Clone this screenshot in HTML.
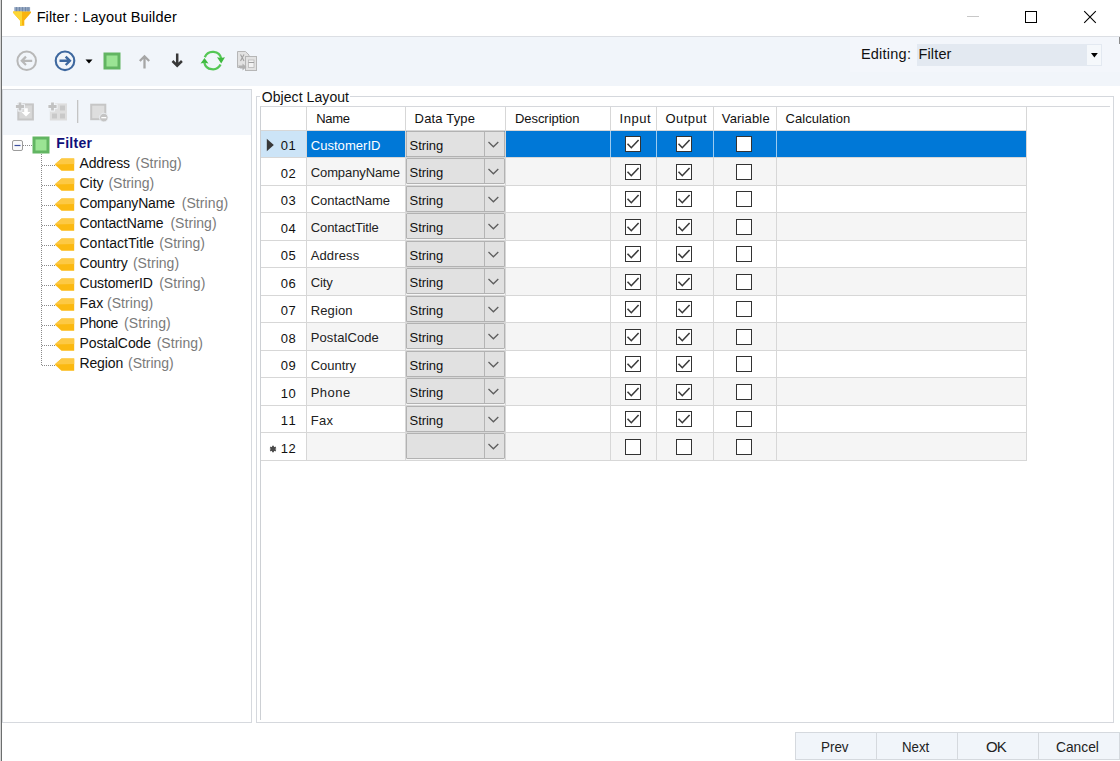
<!DOCTYPE html><html><head><meta charset="utf-8"><title>Filter : Layout Builder</title><style>
*{box-sizing:border-box;margin:0;padding:0}
html,body{width:1120px;height:761px;overflow:hidden;background:#fff}
body{font-family:"Liberation Sans",sans-serif;font-size:13px;color:#1e1e1e;position:relative}
.abs{position:absolute}
#lborder{left:0;top:0;width:2px;height:761px;background:linear-gradient(90deg,#d6d6d6 0,#d6d6d6 1px,#6c6e6e 1px,#6c6e6e 2px)}
#title{left:2px;top:0;width:1118px;height:37px;background:#fff;border-bottom:1px solid #dcdfe4}
#toolbar{left:2px;top:37px;width:1118px;height:49px;background:#f1f5fa}
#lpanel{left:2px;top:89px;width:250px;height:634px;border:1px solid #d6d9de;background:#fff}
#lhead{left:0;top:0;width:248px;height:45px;background:#f1f5fa}
#gbox{left:256px;top:96px;width:858px;height:627px;border:1px solid #d5d8dd}
#gtitle{left:260px;top:89px;width:90px;height:16px;background:#fff}
#grid{left:260px;top:106px;width:850px;height:614px;border-left:1px solid #cdd0d4;border-top:1px solid #d6d8dc}
.t{position:absolute;white-space:nowrap;line-height:20px;height:20px}
.hl{position:absolute;background:#d7d7d7}
.cb{position:absolute;width:16px;height:16px;border:1px solid #333;background:#fff}
.combo{position:absolute;background:#e1e1e1;border:1px solid #b2b2b2;border-radius:1px}
.btn{position:absolute;top:732px;height:28px;width:82px;border:1px solid #d5d9de;background:#f1f5fa}
</style></head><body>
<div class="abs" id="lborder"></div>
<div class="abs" id="title">
<svg class="abs" style="left:10px;top:5px" width="22" height="23" viewBox="0 0 22 23"><rect x="2.300" y="2.100" width="15.800" height="4.600" fill="#91a4bf"/><path d="M4.500 2.100 V6.500 M7.500 2.100 V6.500 M10.500 2.100 V6.500 M13.500 2.100 V6.500 M16 2.100 V6.500" stroke="#7389a8" stroke-width="1"/><path d="M1.100 6.500 H19 V7.700 L12.300 15.500 V20.800 H8 V15.500 L1.100 7.700 Z" fill="#f8b40e"/><path d="M1.100 6.500 H10 V20.800 H8 V15.500 L1.100 7.700 Z" fill="#fdd633"/></svg>
<svg class="abs" style="left:950px;top:0" width="168" height="36" viewBox="0 0 168 36"><path d="M15 16.500 H27" stroke="#c8c8c8" stroke-width="1"/><rect x="73.500" y="11.500" width="11" height="11" fill="none" stroke="#000" stroke-width="1"/><path d="M132.200 11.200 L143.800 22.800 M143.800 11.200 L132.200 22.800" stroke="#000" stroke-width="1.100"/></svg>
</div>
<div class="t" style="left:36.63px;top:6.68px;font-size:14.5px;color:#000;letter-spacing:0.140px">Filter : Layout Builder</div>
<div class="abs" id="toolbar">
<div class="abs" style="left:848px;top:0;width:270px;height:35px;background:#f3f6fb"></div>
<svg class="abs" style="left:0;top:0" width="270" height="48" viewBox="0 0 270 48">
<circle cx="24.700" cy="23.800" r="9.300" fill="none" stroke="#b8b8b8" stroke-width="2"/><path d="M30.200 23.800 H20.500 M24 19.600 L19.800 23.800 L24 28" fill="none" stroke="#b8b8b8" stroke-width="2.200"/>
<circle cx="63" cy="23.800" r="9.300" fill="none" stroke="#3e689f" stroke-width="2.100"/><path d="M57.500 23.800 H67.200 M63.700 19.600 L67.900 23.800 L63.700 28" fill="none" stroke="#3e689f" stroke-width="2.400"/>
<path d="M83.500 22.500 H90.500 L87 26.500 Z" fill="#000"/>
<rect x="103" y="17" width="14" height="14" fill="#9be494" stroke="#62b562" stroke-width="3"/>
<path d="M142.500 31.500 V19.500 M137.800 24 L142.500 19.300 L147.200 24" fill="none" stroke="#a6a6a6" stroke-width="2.300"/>
<path d="M175.200 16.500 V28.500 M170.500 24 L175.200 28.700 L179.900 24" fill="none" stroke="#383838" stroke-width="2.500"/>
<g fill="none" stroke="#55c755" stroke-width="2.300"><path d="M202.79 20.20 A8.7 8.7 0 0 1 219.31 21.79"/><path d="M218.55 27.55 A8.7 8.7 0 0 1 202.29 25.41"/></g>
<path d="M215.0 20.2 L219.0 21.0 L223.0 20.2 L219.2 26.4 Z" fill="#3fba3f"/><path d="M198.5 26.4 L202.5 25.7 L206.5 26.4 L202.5 21.0 Z" fill="#3fba3f"/>
<g fill="#e2e2e2" stroke="#b6b6b6" stroke-width="1"><path d="M235.500 14.500 H243.500 L247 18 V30.500 H235.500 Z"/><rect x="243.500" y="19.500" width="11" height="14"/></g><rect x="246.500" y="23" width="5.500" height="7.500" fill="#f2f2f2" stroke="#b8b8b8" stroke-width="0.800"/><path d="M238.500 17.500 L242 24 M242 17.500 L238.500 24 M246.500 25.500 H252" stroke="#a0a0a0" stroke-width="1.100" fill="none"/><path d="M236 28.500 H240.500 V26.500 L244.500 30 L240.500 33.500 V31.500 H238 Z" fill="#b0b0b0"/>
</svg>
<div class="abs" style="left:915px;top:7px;width:185px;height:22px;background:#e3e9f1"></div>
<div class="abs" style="left:1085px;top:8px;width:14px;height:20px;background:#f5f8fb"></div>
<svg class="abs" style="left:1085px;top:7px" width="14" height="22"><path d="M4 9 H10.800 L7.400 13.500 Z" fill="#000"/></svg>
<div class="abs" style="left:1117px;top:0;width:1px;height:7px;background:#8c8c8c"></div>
</div>
<div class="t" style="left:860.93px;top:44.28px;font-size:14.5px;color:#111;letter-spacing:0.233px">Editing:</div>
<div class="t" style="left:918.53px;top:44.28px;font-size:14.5px;color:#111;letter-spacing:0.135px">Filter</div>
<div class="abs" id="lpanel"><div class="abs" id="lhead"></div>
<svg class="abs" style="left:1px;top:-1px" width="247" height="46" viewBox="0 0 247 46">
<rect x="14.300" y="15.400" width="14.600" height="15.100" fill="#d8d8d8" stroke="#c6c6c6" stroke-width="2"/>
<path d="M20.200 19.300 H23.800 V23 H26.500 L22 27.600 L17.500 23 H20.200 Z" fill="#fff"/>
<path d="M14.600 13.400 H17.400 V16.100 H20.100 V18.900 H17.400 V21.600 H14.600 V18.900 H11.900 V16.100 H14.600 Z" fill="#c2c2c2" stroke="#f4f7fb" stroke-width="1.800" paint-order="stroke"/>
<rect x="45.800" y="14.400" width="17.200" height="17.100" fill="#dedede"/>
<g fill="#c9c9c9"><rect x="56" y="16.500" width="5" height="5"/><rect x="48" y="24.500" width="5" height="5"/><rect x="56" y="24.500" width="5" height="5"/></g>
<path d="M47.100 13.400 H49.900 V16.100 H52.600 V18.900 H49.900 V21.600 H47.100 V18.900 H44.400 V16.100 H47.100 Z" fill="#c2c2c2" stroke="#f4f7fb" stroke-width="1.800" paint-order="stroke"/>
<rect x="73" y="11" width="1.300" height="23" fill="#c4c4c4"/>
<rect x="87.200" y="15.700" width="14.100" height="14.500" fill="#dedede" stroke="#c6c6c6" stroke-width="2"/><circle cx="99.800" cy="28.600" r="4.300" fill="#c4c4c4" stroke="#f1f5fa" stroke-width="0.800"/><rect x="97.300" y="28" width="5" height="1.300" fill="#fff"/>
</svg>
<svg class="abs" style="left:1px;top:45px" width="247" height="250" viewBox="0 0 247 250">
<rect x="8.500" y="5.500" width="10" height="10" rx="1.500" fill="#fafafa" stroke="#9c9c9c"/><path d="M10.500 10.500 H16.500" stroke="#3c4fa0" stroke-width="1.200"/>
<path d="M19 10.500 H28" stroke="#8a8a8a" stroke-dasharray="1 1"/>
<rect x="30" y="3" width="14" height="14" fill="#9be494" stroke="#62b562" stroke-width="3"/>
<path d="M37.500 19 V230" stroke="#8a8a8a" stroke-dasharray="1 1"/>
<path d="M38 30.5 H51" stroke="#8a8a8a" stroke-dasharray="1 1"/>
<path d="M50.700 29.6 L57.500 23.5 H70.200 V35.7 H57.500 Z" fill="#fbb911"/><path d="M50.700 29.6 L57.500 23.5 H70.200 V29.1 Z" fill="#fdc944"/>
<path d="M38 50.5 H51" stroke="#8a8a8a" stroke-dasharray="1 1"/>
<path d="M50.700 49.6 L57.500 43.5 H70.200 V55.7 H57.500 Z" fill="#fbb911"/><path d="M50.700 49.6 L57.500 43.5 H70.200 V49.1 Z" fill="#fdc944"/>
<path d="M38 70.5 H51" stroke="#8a8a8a" stroke-dasharray="1 1"/>
<path d="M50.700 69.6 L57.500 63.5 H70.200 V75.7 H57.500 Z" fill="#fbb911"/><path d="M50.700 69.6 L57.500 63.5 H70.200 V69.1 Z" fill="#fdc944"/>
<path d="M38 90.5 H51" stroke="#8a8a8a" stroke-dasharray="1 1"/>
<path d="M50.700 89.6 L57.500 83.5 H70.200 V95.7 H57.500 Z" fill="#fbb911"/><path d="M50.700 89.6 L57.500 83.5 H70.200 V89.1 Z" fill="#fdc944"/>
<path d="M38 110.5 H51" stroke="#8a8a8a" stroke-dasharray="1 1"/>
<path d="M50.700 109.6 L57.500 103.5 H70.200 V115.7 H57.500 Z" fill="#fbb911"/><path d="M50.700 109.6 L57.500 103.5 H70.200 V109.1 Z" fill="#fdc944"/>
<path d="M38 130.5 H51" stroke="#8a8a8a" stroke-dasharray="1 1"/>
<path d="M50.700 129.6 L57.500 123.5 H70.200 V135.7 H57.500 Z" fill="#fbb911"/><path d="M50.700 129.6 L57.500 123.5 H70.200 V129.1 Z" fill="#fdc944"/>
<path d="M38 150.5 H51" stroke="#8a8a8a" stroke-dasharray="1 1"/>
<path d="M50.700 149.6 L57.500 143.5 H70.200 V155.7 H57.500 Z" fill="#fbb911"/><path d="M50.700 149.6 L57.500 143.5 H70.200 V149.1 Z" fill="#fdc944"/>
<path d="M38 170.5 H51" stroke="#8a8a8a" stroke-dasharray="1 1"/>
<path d="M50.700 169.6 L57.500 163.5 H70.200 V175.7 H57.500 Z" fill="#fbb911"/><path d="M50.700 169.6 L57.500 163.5 H70.200 V169.1 Z" fill="#fdc944"/>
<path d="M38 190.5 H51" stroke="#8a8a8a" stroke-dasharray="1 1"/>
<path d="M50.700 189.6 L57.500 183.5 H70.200 V195.7 H57.500 Z" fill="#fbb911"/><path d="M50.700 189.6 L57.500 183.5 H70.200 V189.1 Z" fill="#fdc944"/>
<path d="M38 210.5 H51" stroke="#8a8a8a" stroke-dasharray="1 1"/>
<path d="M50.700 209.6 L57.500 203.5 H70.200 V215.7 H57.500 Z" fill="#fbb911"/><path d="M50.700 209.6 L57.500 203.5 H70.200 V209.1 Z" fill="#fdc944"/>
<path d="M38 230.5 H51" stroke="#8a8a8a" stroke-dasharray="1 1"/>
<path d="M50.700 229.6 L57.500 223.5 H70.200 V235.7 H57.500 Z" fill="#fbb911"/><path d="M50.700 229.6 L57.500 223.5 H70.200 V229.1 Z" fill="#fdc944"/>
</svg>
</div>
<div class="t" style="left:56.36px;top:133.15px;font-size:14px;color:#10107a;letter-spacing:0.262px;font-weight:bold">Filter</div>
<div class="t" style="left:79.46px;top:152.75px;font-size:14px;color:#111;letter-spacing:-0.136px">Address</div>
<div class="t" style="left:135.56px;top:152.75px;font-size:14px;color:#7a7a7a;letter-spacing:0.035px">(String)</div>
<div class="t" style="left:79.46px;top:172.75px;font-size:14px;color:#111;letter-spacing:0.010px">City</div>
<div class="t" style="left:108.46px;top:172.75px;font-size:14px;color:#7a7a7a;letter-spacing:-0.037px">(String)</div>
<div class="t" style="left:79.46px;top:192.75px;font-size:14px;color:#111;letter-spacing:-0.172px">CompanyName</div>
<div class="t" style="left:181.66px;top:192.75px;font-size:14px;color:#7a7a7a;letter-spacing:0.092px">(String)</div>
<div class="t" style="left:79.46px;top:212.75px;font-size:14px;color:#111;letter-spacing:-0.145px">ContactName</div>
<div class="t" style="left:170.41px;top:212.75px;font-size:14px;color:#7a7a7a;letter-spacing:0.042px">(String)</div>
<div class="t" style="left:79.46px;top:232.75px;font-size:14px;color:#111;letter-spacing:0.042px">ContactTitle</div>
<div class="t" style="left:159.16px;top:232.75px;font-size:14px;color:#7a7a7a;letter-spacing:-0.008px">(String)</div>
<div class="t" style="left:79.46px;top:252.75px;font-size:14px;color:#111;letter-spacing:-0.113px">Country</div>
<div class="t" style="left:132.91px;top:252.75px;font-size:14px;color:#7a7a7a;letter-spacing:0.042px">(String)</div>
<div class="t" style="left:79.46px;top:272.75px;font-size:14px;color:#111;letter-spacing:-0.149px">CustomerID</div>
<div class="t" style="left:159.16px;top:272.75px;font-size:14px;color:#7a7a7a;letter-spacing:0.035px">(String)</div>
<div class="t" style="left:79.46px;top:292.75px;font-size:14px;color:#111;letter-spacing:0.201px">Fax</div>
<div class="t" style="left:107.06px;top:292.75px;font-size:14px;color:#7a7a7a;letter-spacing:0.035px">(String)</div>
<div class="t" style="left:79.46px;top:312.75px;font-size:14px;color:#111;letter-spacing:-0.386px">Phone</div>
<div class="t" style="left:123.96px;top:312.75px;font-size:14px;color:#7a7a7a;letter-spacing:0.121px">(String)</div>
<div class="t" style="left:79.46px;top:332.75px;font-size:14px;color:#111;letter-spacing:-0.082px">PostalCode</div>
<div class="t" style="left:156.66px;top:332.75px;font-size:14px;color:#7a7a7a;letter-spacing:0.035px">(String)</div>
<div class="t" style="left:79.46px;top:352.75px;font-size:14px;color:#111;letter-spacing:-0.125px">Region</div>
<div class="t" style="left:128.06px;top:352.75px;font-size:14px;color:#7a7a7a;letter-spacing:-0.037px">(String)</div>
<div class="abs" id="gbox"></div><div class="abs" id="gtitle"></div>
<div class="t" style="left:261.76px;top:87.25px;font-size:14px;color:#111;letter-spacing:0.071px">Object Layout</div>
<div class="abs" id="grid"></div>
<div class="t" style="left:316.22px;top:108.70px;font-size:13px;color:#111;letter-spacing:-0.282px">Name</div>
<div class="t" style="left:414.62px;top:108.70px;font-size:13px;color:#111;letter-spacing:0.172px">Data Type</div>
<div class="t" style="left:514.92px;top:108.70px;font-size:13px;color:#111;letter-spacing:-0.040px">Description</div>
<div class="t" style="left:619.62px;top:108.70px;font-size:13px;color:#111;letter-spacing:0.504px">Input</div>
<div class="t" style="left:665.42px;top:108.70px;font-size:13px;color:#111;letter-spacing:0.461px">Output</div>
<div class="t" style="left:721.82px;top:108.70px;font-size:13px;color:#111;letter-spacing:0.157px">Variable</div>
<div class="t" style="left:785.62px;top:108.70px;font-size:13px;color:#111;letter-spacing:0.022px">Calculation</div>
<div class="abs" style="left:406px;top:131px;width:99px;height:329px;background:#cbcbcb"></div>
<div class="abs" style="left:261px;top:131px;width:45px;height:26px;background:#cce4f7"></div>
<div class="abs" style="left:307px;top:131px;width:719px;height:26px;background:#0078d7"></div>
<div class="hl" style="left:261px;top:157px;width:766px;height:1px"></div>
<div class="t" style="left:280.82px;top:136.00px;font-size:13px;color:#111;letter-spacing:0.370px">01</div>
<svg class="abs" style="left:266px;top:138px" width="9" height="14"><path d="M0.800 0.800 L7.800 7 L0.800 13.300 Z" fill="#383838"/></svg>
<div class="t" style="left:310.72px;top:135.50px;font-size:13px;color:#fff;letter-spacing:0.042px">CustomerID</div>
<div class="combo" style="left:406px;top:131px;width:99px;height:26px"></div>
<div class="abs" style="left:484px;top:132px;width:1px;height:24px;background:#b4b4b4"></div>
<div class="t" style="left:409.52px;top:135.50px;font-size:13px;color:#111;letter-spacing:-0.046px">String</div>
<svg class="abs" style="left:486px;top:140px" width="15" height="10"><path d="M2.500 2 L7.400 6.800 L12.300 2" fill="none" stroke="#5e5e5e" stroke-width="1.300"/></svg>
<div class="cb" style="left:625px;top:136px"></div>
<svg class="abs" style="left:625px;top:136px" width="16" height="16"><path d="M2.500 7.800 L6.300 11.700 L13.600 4" fill="none" stroke="#3a3a3a" stroke-width="1.600"/></svg>
<div class="cb" style="left:676px;top:136px"></div>
<svg class="abs" style="left:676px;top:136px" width="16" height="16"><path d="M2.500 7.800 L6.300 11.700 L13.600 4" fill="none" stroke="#3a3a3a" stroke-width="1.600"/></svg>
<div class="cb" style="left:736px;top:136px"></div>
<div class="abs" style="left:307px;top:158px;width:719px;height:27px;background:#f5f5f5"></div>
<div class="hl" style="left:261px;top:185px;width:766px;height:1px"></div>
<div class="t" style="left:280.82px;top:163.50px;font-size:13px;color:#111;letter-spacing:0.370px">02</div>
<div class="t" style="left:310.72px;top:163.00px;font-size:13px;color:#222;letter-spacing:-0.098px">CompanyName</div>
<div class="combo" style="left:406px;top:158px;width:99px;height:26px"></div>
<div class="abs" style="left:484px;top:159px;width:1px;height:24px;background:#b4b4b4"></div>
<div class="t" style="left:409.52px;top:163.00px;font-size:13px;color:#111;letter-spacing:-0.046px">String</div>
<svg class="abs" style="left:486px;top:167px" width="15" height="10"><path d="M2.500 2 L7.400 6.800 L12.300 2" fill="none" stroke="#5e5e5e" stroke-width="1.300"/></svg>
<div class="cb" style="left:625px;top:164px"></div>
<svg class="abs" style="left:625px;top:164px" width="16" height="16"><path d="M2.500 7.800 L6.300 11.700 L13.600 4" fill="none" stroke="#3a3a3a" stroke-width="1.600"/></svg>
<div class="cb" style="left:676px;top:164px"></div>
<svg class="abs" style="left:676px;top:164px" width="16" height="16"><path d="M2.500 7.800 L6.300 11.700 L13.600 4" fill="none" stroke="#3a3a3a" stroke-width="1.600"/></svg>
<div class="cb" style="left:736px;top:164px"></div>
<div class="hl" style="left:261px;top:212px;width:766px;height:1px"></div>
<div class="t" style="left:280.82px;top:191.00px;font-size:13px;color:#111;letter-spacing:0.370px">03</div>
<div class="t" style="left:310.72px;top:190.50px;font-size:13px;color:#222;letter-spacing:-0.015px">ContactName</div>
<div class="combo" style="left:406px;top:186px;width:99px;height:26px"></div>
<div class="abs" style="left:484px;top:187px;width:1px;height:24px;background:#b4b4b4"></div>
<div class="t" style="left:409.52px;top:190.50px;font-size:13px;color:#111;letter-spacing:-0.046px">String</div>
<svg class="abs" style="left:486px;top:195px" width="15" height="10"><path d="M2.500 2 L7.400 6.800 L12.300 2" fill="none" stroke="#5e5e5e" stroke-width="1.300"/></svg>
<div class="cb" style="left:625px;top:191px"></div>
<svg class="abs" style="left:625px;top:191px" width="16" height="16"><path d="M2.500 7.800 L6.300 11.700 L13.600 4" fill="none" stroke="#3a3a3a" stroke-width="1.600"/></svg>
<div class="cb" style="left:676px;top:191px"></div>
<svg class="abs" style="left:676px;top:191px" width="16" height="16"><path d="M2.500 7.800 L6.300 11.700 L13.600 4" fill="none" stroke="#3a3a3a" stroke-width="1.600"/></svg>
<div class="cb" style="left:736px;top:191px"></div>
<div class="abs" style="left:307px;top:213px;width:719px;height:27px;background:#f5f5f5"></div>
<div class="hl" style="left:261px;top:240px;width:766px;height:1px"></div>
<div class="t" style="left:280.82px;top:218.50px;font-size:13px;color:#111;letter-spacing:0.370px">04</div>
<div class="t" style="left:310.72px;top:218.00px;font-size:13px;color:#222;letter-spacing:-0.068px">ContactTitle</div>
<div class="combo" style="left:406px;top:213px;width:99px;height:26px"></div>
<div class="abs" style="left:484px;top:214px;width:1px;height:24px;background:#b4b4b4"></div>
<div class="t" style="left:409.52px;top:218.00px;font-size:13px;color:#111;letter-spacing:-0.046px">String</div>
<svg class="abs" style="left:486px;top:222px" width="15" height="10"><path d="M2.500 2 L7.400 6.800 L12.300 2" fill="none" stroke="#5e5e5e" stroke-width="1.300"/></svg>
<div class="cb" style="left:625px;top:219px"></div>
<svg class="abs" style="left:625px;top:219px" width="16" height="16"><path d="M2.500 7.800 L6.300 11.700 L13.600 4" fill="none" stroke="#3a3a3a" stroke-width="1.600"/></svg>
<div class="cb" style="left:676px;top:219px"></div>
<svg class="abs" style="left:676px;top:219px" width="16" height="16"><path d="M2.500 7.800 L6.300 11.700 L13.600 4" fill="none" stroke="#3a3a3a" stroke-width="1.600"/></svg>
<div class="cb" style="left:736px;top:219px"></div>
<div class="hl" style="left:261px;top:267px;width:766px;height:1px"></div>
<div class="t" style="left:280.82px;top:246.00px;font-size:13px;color:#111;letter-spacing:0.370px">05</div>
<div class="t" style="left:310.72px;top:245.50px;font-size:13px;color:#222;letter-spacing:0.123px">Address</div>
<div class="combo" style="left:406px;top:241px;width:99px;height:26px"></div>
<div class="abs" style="left:484px;top:242px;width:1px;height:24px;background:#b4b4b4"></div>
<div class="t" style="left:409.52px;top:245.50px;font-size:13px;color:#111;letter-spacing:-0.046px">String</div>
<svg class="abs" style="left:486px;top:250px" width="15" height="10"><path d="M2.500 2 L7.400 6.800 L12.300 2" fill="none" stroke="#5e5e5e" stroke-width="1.300"/></svg>
<div class="cb" style="left:625px;top:246px"></div>
<svg class="abs" style="left:625px;top:246px" width="16" height="16"><path d="M2.500 7.800 L6.300 11.700 L13.600 4" fill="none" stroke="#3a3a3a" stroke-width="1.600"/></svg>
<div class="cb" style="left:676px;top:246px"></div>
<svg class="abs" style="left:676px;top:246px" width="16" height="16"><path d="M2.500 7.800 L6.300 11.700 L13.600 4" fill="none" stroke="#3a3a3a" stroke-width="1.600"/></svg>
<div class="cb" style="left:736px;top:246px"></div>
<div class="abs" style="left:307px;top:268px;width:719px;height:27px;background:#f5f5f5"></div>
<div class="hl" style="left:261px;top:295px;width:766px;height:1px"></div>
<div class="t" style="left:280.82px;top:273.50px;font-size:13px;color:#111;letter-spacing:0.370px">06</div>
<div class="t" style="left:310.72px;top:273.00px;font-size:13px;color:#222;letter-spacing:-0.153px">City</div>
<div class="combo" style="left:406px;top:268px;width:99px;height:26px"></div>
<div class="abs" style="left:484px;top:269px;width:1px;height:24px;background:#b4b4b4"></div>
<div class="t" style="left:409.52px;top:273.00px;font-size:13px;color:#111;letter-spacing:-0.046px">String</div>
<svg class="abs" style="left:486px;top:277px" width="15" height="10"><path d="M2.500 2 L7.400 6.800 L12.300 2" fill="none" stroke="#5e5e5e" stroke-width="1.300"/></svg>
<div class="cb" style="left:625px;top:274px"></div>
<svg class="abs" style="left:625px;top:274px" width="16" height="16"><path d="M2.500 7.800 L6.300 11.700 L13.600 4" fill="none" stroke="#3a3a3a" stroke-width="1.600"/></svg>
<div class="cb" style="left:676px;top:274px"></div>
<svg class="abs" style="left:676px;top:274px" width="16" height="16"><path d="M2.500 7.800 L6.300 11.700 L13.600 4" fill="none" stroke="#3a3a3a" stroke-width="1.600"/></svg>
<div class="cb" style="left:736px;top:274px"></div>
<div class="hl" style="left:261px;top:322px;width:766px;height:1px"></div>
<div class="t" style="left:280.82px;top:301.00px;font-size:13px;color:#111;letter-spacing:0.370px">07</div>
<div class="t" style="left:310.72px;top:300.50px;font-size:13px;color:#222;letter-spacing:0.107px">Region</div>
<div class="combo" style="left:406px;top:296px;width:99px;height:26px"></div>
<div class="abs" style="left:484px;top:297px;width:1px;height:24px;background:#b4b4b4"></div>
<div class="t" style="left:409.52px;top:300.50px;font-size:13px;color:#111;letter-spacing:-0.046px">String</div>
<svg class="abs" style="left:486px;top:305px" width="15" height="10"><path d="M2.500 2 L7.400 6.800 L12.300 2" fill="none" stroke="#5e5e5e" stroke-width="1.300"/></svg>
<div class="cb" style="left:625px;top:301px"></div>
<svg class="abs" style="left:625px;top:301px" width="16" height="16"><path d="M2.500 7.800 L6.300 11.700 L13.600 4" fill="none" stroke="#3a3a3a" stroke-width="1.600"/></svg>
<div class="cb" style="left:676px;top:301px"></div>
<svg class="abs" style="left:676px;top:301px" width="16" height="16"><path d="M2.500 7.800 L6.300 11.700 L13.600 4" fill="none" stroke="#3a3a3a" stroke-width="1.600"/></svg>
<div class="cb" style="left:736px;top:301px"></div>
<div class="abs" style="left:307px;top:323px;width:719px;height:27px;background:#f5f5f5"></div>
<div class="hl" style="left:261px;top:350px;width:766px;height:1px"></div>
<div class="t" style="left:280.82px;top:328.50px;font-size:13px;color:#111;letter-spacing:0.370px">08</div>
<div class="t" style="left:310.72px;top:328.00px;font-size:13px;color:#222;letter-spacing:0.102px">PostalCode</div>
<div class="combo" style="left:406px;top:323px;width:99px;height:26px"></div>
<div class="abs" style="left:484px;top:324px;width:1px;height:24px;background:#b4b4b4"></div>
<div class="t" style="left:409.52px;top:328.00px;font-size:13px;color:#111;letter-spacing:-0.046px">String</div>
<svg class="abs" style="left:486px;top:332px" width="15" height="10"><path d="M2.500 2 L7.400 6.800 L12.300 2" fill="none" stroke="#5e5e5e" stroke-width="1.300"/></svg>
<div class="cb" style="left:625px;top:329px"></div>
<svg class="abs" style="left:625px;top:329px" width="16" height="16"><path d="M2.500 7.800 L6.300 11.700 L13.600 4" fill="none" stroke="#3a3a3a" stroke-width="1.600"/></svg>
<div class="cb" style="left:676px;top:329px"></div>
<svg class="abs" style="left:676px;top:329px" width="16" height="16"><path d="M2.500 7.800 L6.300 11.700 L13.600 4" fill="none" stroke="#3a3a3a" stroke-width="1.600"/></svg>
<div class="cb" style="left:736px;top:329px"></div>
<div class="hl" style="left:261px;top:377px;width:766px;height:1px"></div>
<div class="t" style="left:280.82px;top:356.00px;font-size:13px;color:#111;letter-spacing:0.370px">09</div>
<div class="t" style="left:310.72px;top:355.50px;font-size:13px;color:#222;letter-spacing:-0.032px">Country</div>
<div class="combo" style="left:406px;top:351px;width:99px;height:26px"></div>
<div class="abs" style="left:484px;top:352px;width:1px;height:24px;background:#b4b4b4"></div>
<div class="t" style="left:409.52px;top:355.50px;font-size:13px;color:#111;letter-spacing:-0.046px">String</div>
<svg class="abs" style="left:486px;top:360px" width="15" height="10"><path d="M2.500 2 L7.400 6.800 L12.300 2" fill="none" stroke="#5e5e5e" stroke-width="1.300"/></svg>
<div class="cb" style="left:625px;top:356px"></div>
<svg class="abs" style="left:625px;top:356px" width="16" height="16"><path d="M2.500 7.800 L6.300 11.700 L13.600 4" fill="none" stroke="#3a3a3a" stroke-width="1.600"/></svg>
<div class="cb" style="left:676px;top:356px"></div>
<svg class="abs" style="left:676px;top:356px" width="16" height="16"><path d="M2.500 7.800 L6.300 11.700 L13.600 4" fill="none" stroke="#3a3a3a" stroke-width="1.600"/></svg>
<div class="cb" style="left:736px;top:356px"></div>
<div class="abs" style="left:307px;top:378px;width:719px;height:27px;background:#f5f5f5"></div>
<div class="hl" style="left:261px;top:405px;width:766px;height:1px"></div>
<div class="t" style="left:280.82px;top:383.50px;font-size:13px;color:#111;letter-spacing:0.370px">10</div>
<div class="t" style="left:310.72px;top:383.00px;font-size:13px;color:#222;letter-spacing:0.485px">Phone</div>
<div class="combo" style="left:406px;top:378px;width:99px;height:26px"></div>
<div class="abs" style="left:484px;top:379px;width:1px;height:24px;background:#b4b4b4"></div>
<div class="t" style="left:409.52px;top:383.00px;font-size:13px;color:#111;letter-spacing:-0.046px">String</div>
<svg class="abs" style="left:486px;top:387px" width="15" height="10"><path d="M2.500 2 L7.400 6.800 L12.300 2" fill="none" stroke="#5e5e5e" stroke-width="1.300"/></svg>
<div class="cb" style="left:625px;top:384px"></div>
<svg class="abs" style="left:625px;top:384px" width="16" height="16"><path d="M2.500 7.800 L6.300 11.700 L13.600 4" fill="none" stroke="#3a3a3a" stroke-width="1.600"/></svg>
<div class="cb" style="left:676px;top:384px"></div>
<svg class="abs" style="left:676px;top:384px" width="16" height="16"><path d="M2.500 7.800 L6.300 11.700 L13.600 4" fill="none" stroke="#3a3a3a" stroke-width="1.600"/></svg>
<div class="cb" style="left:736px;top:384px"></div>
<div class="hl" style="left:261px;top:432px;width:766px;height:1px"></div>
<div class="t" style="left:280.82px;top:411.00px;font-size:13px;color:#111;letter-spacing:1.335px">11</div>
<div class="t" style="left:310.72px;top:410.50px;font-size:13px;color:#222;letter-spacing:0.330px">Fax</div>
<div class="combo" style="left:406px;top:406px;width:99px;height:26px"></div>
<div class="abs" style="left:484px;top:407px;width:1px;height:24px;background:#b4b4b4"></div>
<div class="t" style="left:409.52px;top:410.50px;font-size:13px;color:#111;letter-spacing:-0.046px">String</div>
<svg class="abs" style="left:486px;top:415px" width="15" height="10"><path d="M2.500 2 L7.400 6.800 L12.300 2" fill="none" stroke="#5e5e5e" stroke-width="1.300"/></svg>
<div class="cb" style="left:625px;top:411px"></div>
<svg class="abs" style="left:625px;top:411px" width="16" height="16"><path d="M2.500 7.800 L6.300 11.700 L13.600 4" fill="none" stroke="#3a3a3a" stroke-width="1.600"/></svg>
<div class="cb" style="left:676px;top:411px"></div>
<svg class="abs" style="left:676px;top:411px" width="16" height="16"><path d="M2.500 7.800 L6.300 11.700 L13.600 4" fill="none" stroke="#3a3a3a" stroke-width="1.600"/></svg>
<div class="cb" style="left:736px;top:411px"></div>
<div class="abs" style="left:307px;top:433px;width:719px;height:27px;background:#f5f5f5"></div>
<div class="hl" style="left:261px;top:460px;width:766px;height:1px"></div>
<div class="t" style="left:280.82px;top:438.50px;font-size:13px;color:#111;letter-spacing:0.370px">12</div>
<svg class="abs" style="left:268px;top:444px" width="10" height="10"><path d="M5 1.700 V8.300 M2.150 3.350 L7.850 6.650 M7.850 3.350 L2.150 6.650" stroke="#4a4a4a" stroke-width="1.800"/><circle cx="5" cy="5" r="2.200" fill="#4a4a4a"/></svg>
<div class="combo" style="left:406px;top:433px;width:99px;height:26px"></div>
<div class="abs" style="left:484px;top:434px;width:1px;height:24px;background:#b4b4b4"></div>
<svg class="abs" style="left:486px;top:442px" width="15" height="10"><path d="M2.500 2 L7.400 6.800 L12.300 2" fill="none" stroke="#5e5e5e" stroke-width="1.300"/></svg>
<div class="cb" style="left:625px;top:439px"></div>
<div class="cb" style="left:676px;top:439px"></div>
<div class="cb" style="left:736px;top:439px"></div>
<div class="hl" style="left:306px;top:107px;width:1px;height:354px"></div>
<div class="hl" style="left:405px;top:107px;width:1px;height:354px"></div>
<div class="hl" style="left:505px;top:107px;width:1px;height:354px"></div>
<div class="hl" style="left:610px;top:107px;width:1px;height:354px"></div>
<div class="hl" style="left:656px;top:107px;width:1px;height:354px"></div>
<div class="hl" style="left:713px;top:107px;width:1px;height:354px"></div>
<div class="hl" style="left:776px;top:107px;width:1px;height:354px"></div>
<div class="hl" style="left:1026px;top:107px;width:1px;height:354px"></div>
<div class="hl" style="left:261px;top:130px;width:766px;height:1px"></div>
<div class="abs" style="left:610px;top:131px;width:1px;height:26px;background:#9ccbf0"></div>
<div class="abs" style="left:656px;top:131px;width:1px;height:26px;background:#9ccbf0"></div>
<div class="abs" style="left:713px;top:131px;width:1px;height:26px;background:#9ccbf0"></div>
<div class="abs" style="left:776px;top:131px;width:1px;height:26px;background:#9ccbf0"></div>
<div class="btn" style="left:795px"></div>
<div class="t" style="left:820.80px;top:736.60px;font-size:15px;color:#222;transform:scaleX(0.8941);transform-origin:0 0">Prev</div>
<div class="btn" style="left:876px"></div>
<div class="t" style="left:902.20px;top:736.60px;font-size:15px;color:#222;transform:scaleX(0.8838);transform-origin:0 0">Next</div>
<div class="btn" style="left:957px"></div>
<div class="t" style="left:986.00px;top:736.60px;font-size:15px;color:#222;letter-spacing:-0.922px">OK</div>
<div class="btn" style="left:1038px"></div>
<div class="t" style="left:1056.07px;top:736.60px;font-size:15px;color:#222;transform:scaleX(0.9191);transform-origin:0 0">Cancel</div>
</body></html>
